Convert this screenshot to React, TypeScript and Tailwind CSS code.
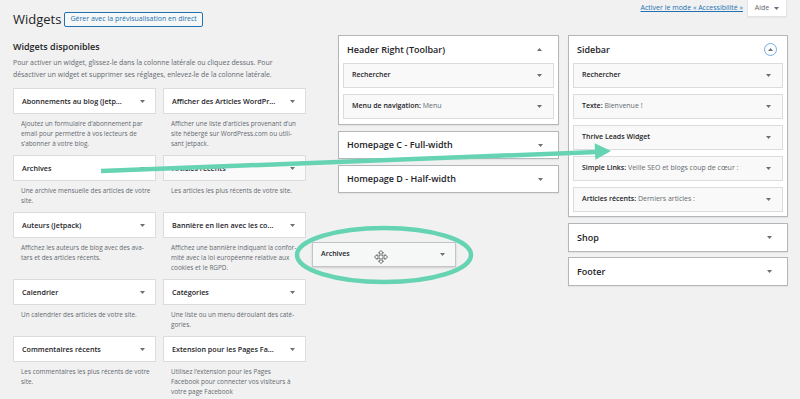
import React from "react";

const Down = () => (
  <svg width="5" height="3" viewBox="0 0 5 3" className="shrink-0">
    <path d="M0 0h5L2.5 3z" fill="#6b6f74" />
  </svg>
);
const Up = () => (
  <svg width="5" height="3" viewBox="0 0 5 3" className="shrink-0">
    <path d="M0 3h5L2.5 0z" fill="#6b6f74" />
  </svg>
);

type W = { t: string; d: string[]; gray?: boolean };
const widgets: W[] = [
  { t: "Abonnements au blog (Jetp...", d: ["Ajoutez un formulaire d’abonnement par", "email pour permettre à vos lecteurs de", "s’abonner à votre blog."] },
  { t: "Afficher des Articles WordPr...", d: ["Afficher une liste d’articles provenant d’un", "site hébergé sur WordPress.com ou utili-", "sant Jetpack."] },
  { t: "Archives", d: ["Une archive mensuelle des articles de votre", "site."] },
  { t: "Articles récents", d: ["Les articles les plus récents de votre site."], gray: true },
  { t: "Auteurs (Jetpack)", d: ["Affichez les auteurs de blog avec des ava-", "tars et des articles récents."] },
  { t: "Bannière en lien avec les co...", d: ["Affichez une bannière indiquant la confor-", "mité avec la loi européenne relative aux", "cookies et le RGPD."] },
  { t: "Calendrier", d: ["Un calendrier des articles de votre site."] },
  { t: "Catégories", d: ["Une liste ou un menu déroulant des caté-", "gories."] },
  { t: "Commentaires récents", d: ["Les commentaires les plus récents de votre", "site."] },
  { t: "Extension pour les Pages Fa...", d: ["Utilisez l’extension pour les Pages", "Facebook pour connecter vos visiteurs à", "votre page Facebook"] },
];

const InnerCard = ({ label, value }: { label: string; value?: string }) => (
  <div className="h-[25px] bg-[#f9f9f9] border border-[#dcdcde] flex items-center justify-between pl-[8px] pr-[11px]">
    <span className="text-[7px] whitespace-nowrap">
      <span className="font-semibold text-[#1d2327]">{label}</span>
      {value && <span className="text-[#646970]"> {value}</span>}
    </span>
    <Down />
  </div>
);

const Collapsed = ({ title, h }: { title: string; h: string }) => (
  <div className={`${h} bg-white border border-[#b4b7ba] shadow-[0_1px_1px_rgba(0,0,0,0.05)] flex items-center justify-between pl-[8px] pr-[15px]`}>
    <span className="text-[9px] font-semibold whitespace-nowrap">{title}</span>
    <Down />
  </div>
);

export default function App() {
  return (
    <div className="w-[800px] h-[399px] bg-[#f1f1f1] relative overflow-hidden font-['Open_Sans',sans-serif] text-[#1d2327]">
      <div className="flex pl-[13px]">
        {/* Left column */}
        <div className="w-[293px] flex flex-col shrink-0">
          <div className="flex items-center mt-[12px] h-[15px]">
            <h1 className="text-[13px] leading-[15px] font-normal">Widgets</h1>
            <div className="ml-[3px] h-[15px] px-[5px] border border-[#2271b1] text-[#2271b1] bg-[#f6f7f7] rounded-[2px] flex items-center text-[7px] whitespace-nowrap">
              Gérer avec la prévisualisation en direct
            </div>
          </div>
          <h2 className="mt-[14px] text-[9px] leading-[12px] font-semibold">Widgets disponibles</h2>
          <p className="mt-[4px] text-[6.9px] leading-[12px] text-[#646970]">
            Pour activer un widget, glissez-le dans la colonne latérale ou cliquez dessus. Pour
            <br />
            désactiver un widget et supprimer ses réglages, enlevez-le de la colonne latérale.
          </p>
          <div className="mt-[7px] grid grid-cols-[143px_143px] gap-x-[7px] items-start">
            {widgets.map((w) => (
              <div key={w.t} className="flex flex-col">
                <div className={`h-[26px] border border-[#dcdcde] ${w.gray ? "bg-[#fafafa]" : "bg-white"} flex items-center justify-between pl-[8px] pr-[10px]`}>
                  <span className="text-[7.2px] font-semibold whitespace-nowrap">{w.t}</span>
                  <Down />
                </div>
                <div className="mt-[5px] mb-[6px] pl-[8px] text-[6.4px] leading-[10px] text-[#646970]">
                  {w.d.map((l) => (
                    <div key={l} className="whitespace-nowrap">{l}</div>
                  ))}
                </div>
              </div>
            ))}
          </div>
        </div>

        {/* Right area */}
        <div className="ml-[32px] w-[450px] flex flex-col">
          <div className="h-[17px] flex items-center justify-end">
            <span className="text-[7px] text-[#2271b1] underline whitespace-nowrap">Activer le mode « Accessibilité »</span>
            <div className="ml-[4px] mr-[1px] w-[40px] h-[17px] bg-white border-x border-b border-[#e2e4e7] shadow-[0_1px_1px_rgba(0,0,0,0.04)] flex items-center justify-center gap-[5px]">
              <span className="text-[7px] text-[#646970]">Aide</span>
              <Down />
            </div>
          </div>
          <div className="mt-[18px] flex gap-[9px]">
            {/* Middle column */}
            <div className="w-[221px] flex flex-col">
              <div className="bg-white border border-[#b4b7ba] shadow-[0_1px_1px_rgba(0,0,0,0.05)]">
                <div className="h-[27px] flex items-center justify-between pl-[8px] pr-[16px]">
                  <span className="text-[9px] font-semibold whitespace-nowrap">Header Right (Toolbar)</span>
                  <Up />
                </div>
                <div className="px-[4px] pb-[5px] flex flex-col gap-[6px]">
                  <InnerCard label="Rechercher" />
                  <InnerCard label="Menu de navigation:" value="Menu" />
                </div>
              </div>
              <div className="mt-[6px]"><Collapsed title="Homepage C - Full-width" h="h-[28px]" /></div>
              <div className="mt-[6px]"><Collapsed title="Homepage D - Half-width" h="h-[28px]" /></div>
            </div>

            {/* Sidebar column */}
            <div className="w-[220px] flex flex-col">
              <div className="bg-white border border-[#b4b7ba] shadow-[0_1px_1px_rgba(0,0,0,0.05)]">
                <div className="h-[27px] flex items-center justify-between pl-[8px] pr-[10px]">
                  <span className="text-[9px] font-semibold whitespace-nowrap">Sidebar</span>
                  <div className="w-[13px] h-[13px] rounded-full border border-[#72aee6] flex items-center justify-center">
                    <Up />
                  </div>
                </div>
                <div className="px-[4px] pb-[4px] flex flex-col gap-[6px]">
                  <InnerCard label="Rechercher" />
                  <InnerCard label="Texte:" value="Bienvenue !" />
                  <InnerCard label="Thrive Leads Widget" />
                  <InnerCard label="Simple Links:" value="Veille SEO et blogs coup de cœur :" />
                  <InnerCard label="Articles récents:" value="Derniers articles :" />
                </div>
              </div>
              <div className="mt-[6px]"><Collapsed title="Shop" h="h-[29px]" /></div>
              <div className="mt-[5px]"><Collapsed title="Footer" h="h-[29px]" /></div>
            </div>
          </div>
        </div>
      </div>

      {/* Dragged widget */}
      <div className="absolute left-[312px] top-[242px] w-[144px] h-[25px] bg-[#f6f7f7] border border-[#c3c4c7] shadow-[0_1px_2px_rgba(0,0,0,0.15)] flex items-center justify-between pl-[8px] pr-[10px]">
        <span className="text-[7px] font-semibold">Archives</span>
        <Down />
      </div>
      <svg className="absolute left-[374px] top-[250px]" width="14" height="14" viewBox="0 0 14 14">
        <path
          d="M7 0.5 L9.5 3 L8 3 L8 6 L11 6 L11 4.5 L13.5 7 L11 9.5 L11 8 L8 8 L8 11 L9.5 11 L7 13.5 L4.5 11 L6 11 L6 8 L3 8 L3 9.5 L0.5 7 L3 4.5 L3 6 L6 6 L6 3 L4.5 3 Z"
          fill="#ffffff"
          stroke="#555"
          strokeWidth="0.9"
          strokeLinejoin="round"
        />
      </svg>

      {/* Annotations */}
      <svg className="absolute left-0 top-0 pointer-events-none" width="800" height="399" viewBox="0 0 800 399">
        <line x1="101" y1="171" x2="597" y2="152" stroke="#66d3b3" strokeWidth="4.5" />
        <polygon points="611,151 594.7,143.2 595.3,159.8" fill="#66d3b3" />
        <ellipse cx="384" cy="255" rx="87" ry="27" fill="none" stroke="#66d3b3" strokeWidth="4.5" />
      </svg>
    </div>
  );
}
